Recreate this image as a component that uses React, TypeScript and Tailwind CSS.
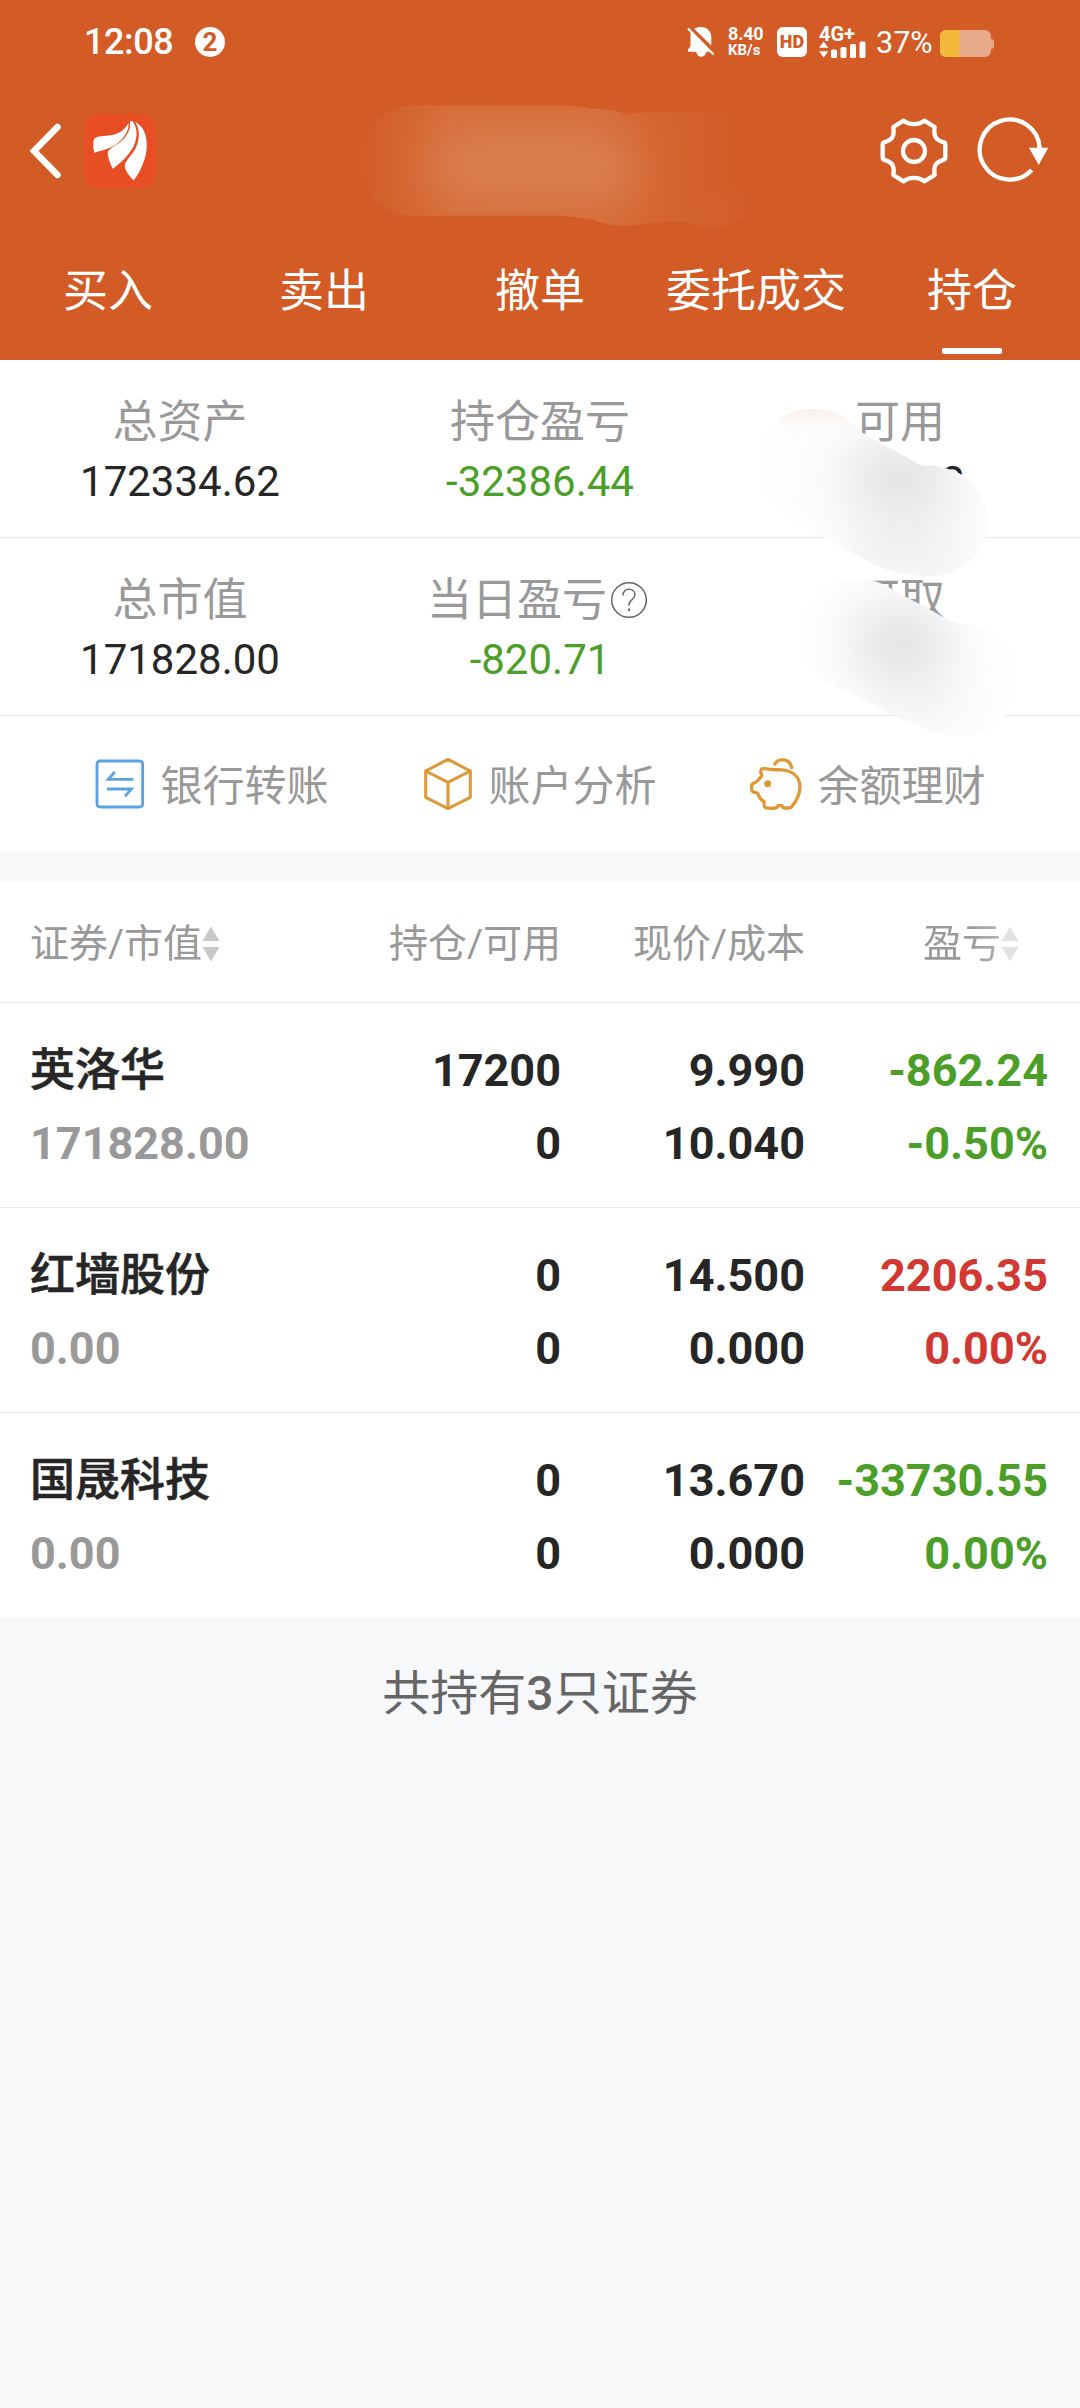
import React from 'react';
import clsx from 'clsx';

interface Holding {
  name: string;
  marketValue: string;
  quantity: string;
  available: string;
  price: string;
  cost: string;
  profit: string;
  profitRate: string;
  trend: 'up' | 'down';
}

const tabs = ['买入', '卖出', '撤单', '委托成交', '持仓'];
const activeTab = '持仓';

const holdings: Holding[] = [
  {
    name: '英洛华',
    marketValue: '171828.00',
    quantity: '17200',
    available: '0',
    price: '9.990',
    cost: '10.040',
    profit: '-862.24',
    profitRate: '-0.50%',
    trend: 'down',
  },
  {
    name: '红墙股份',
    marketValue: '0.00',
    quantity: '0',
    available: '0',
    price: '14.500',
    cost: '0.000',
    profit: '2206.35',
    profitRate: '0.00%',
    trend: 'up',
  },
  {
    name: '国晟科技',
    marketValue: '0.00',
    quantity: '0',
    available: '0',
    price: '13.670',
    cost: '0.000',
    profit: '-33730.55',
    profitRate: '0.00%',
    trend: 'down',
  },
];

const BellOffIcon = () => (
  <svg className="w-[28px] h-[32px] shrink-0" viewBox="0 0 28 32" fill="#fff">
    <path d="M7.300 3C9.300 1.600 11.500 1 14 1c6 0 10.300 4.300 10.300 10.200v8.300z" />
    <path d="M3.500 6L23.500 25.800H1v-2.300l2.500-3.200z" />
    <path d="M9 25.500h10.500c-.8 3.300-2.800 5.300-5.300 5.300s-4.400-2-5.200-5.300z" />
    <path d="M1 2.500L26.500 28.500" stroke="#fff" strokeWidth="2" />
  </svg>
);

const SignalIcon = () => (
  <svg className="w-[47px] h-[17px]" viewBox="0 0 47 17" fill="#fff">
    <path d="M0 6.800L4.700 0.500l4.700 6.300zM0 10.200h9.400L4.700 16.500z" />
    <rect x="12" y="8.500" width="6" height="8.500" rx="1.500" />
    <rect x="21.500" y="6" width="6" height="11" rx="1.500" />
    <rect x="31" y="3" width="6" height="14" rx="1.500" />
    <rect x="40.500" y="0.500" width="6" height="16.500" rx="1.500" />
  </svg>
);

const BatteryIcon = () => (
  <svg className="w-[54px] h-[27px] shrink-0" viewBox="0 0 54 27">
    <path d="M6 0h39a6 6 0 0 1 6 6v3a3 3 0 0 1 3 3v4a3 3 0 0 1-3 3v2a6 6 0 0 1-6 6H6a6 6 0 0 1-6-6V6a6 6 0 0 1 6-6z" fill="#e6a98a" />
    <path d="M6 0h13.500v27H6a6 6 0 0 1-6-6V6a6 6 0 0 1 6-6z" fill="#f2b93b" />
  </svg>
);

const BrandLogo = () => (
  <svg className="w-[72px] h-[74px] shrink-0" viewBox="0 0 210 222" preserveAspectRatio="none">
    <rect width="210" height="222" rx="42" fill="#e84e24" />
    <g fill="#fff">
      <path d="M130 26C118 50 100 62 66 65C44 67 29 68 28 81C26 93 27 104 30 116C60 108 78 103 98 88C118 70 132 48 130 26Z" />
      <path d="M134 22C137 48 125 68 106 84C88 98 70 104 69 118C70 133 76 148 84 164C108 146 130 124 144 98C158 68 156 40 141 21Z" />
      <path d="M150 24C164 49 163 76 150 104C138 126 120 140 119 154C119 169 130 184 145 199C166 172 181 134 183 100C184 66 176 40 150 24Z" />
    </g>
  </svg>
);

const GearIcon = () => (
  <svg className="w-[68px] h-[68px]" viewBox="0 0 204 204" fill="none" stroke="#fff" strokeWidth="13" strokeLinejoin="round">
    <path d="M71 11C87 25 117 25 133 11L164 30C160 57 166 68 192 76Q196 77 196 84V120Q196 127 192 128C166 136 160 147 164 174L133 193C117 179 87 179 71 193L40 174C44 147 38 136 12 128Q8 127 8 120V84Q8 77 12 76C38 68 44 57 40 30Z" />
    <circle cx="102" cy="102" r="33" />
  </svg>
);

const RefreshIcon = () => (
  <svg className="w-[72px] h-[68px]" viewBox="0 0 216 204">
    <path d="M164 159A90 90 0 1 1 188 94" fill="none" stroke="#fff" strokeWidth="13" />
    <path d="M156 92h58l-29 52z" fill="#fff" />
  </svg>
);

const TransferIcon = () => (
  <svg className="w-[50px] h-[50px]" viewBox="0 0 150 150" fill="none" stroke="#5aa2e0" strokeWidth="8.500">
    <rect x="6" y="6" width="137" height="138" rx="9" />
    <path d="M115 61H40L59 39" />
    <path d="M36 90h73L90 112" />
  </svg>
);

const CubeIcon = () => (
  <svg className="w-[50px] h-[54px]" viewBox="0 0 150 162" fill="none" stroke="#df9835" strokeWidth="9" strokeLinejoin="round">
    <path d="M75 7L142 42V121L75 155L8 121V42Z" />
    <path d="M8 42L75 76L142 42M75 76V155" />
  </svg>
);

const PiggyIcon = () => (
  <svg className="w-[54px] h-[54px]" viewBox="0 0 162 162" fill="none" stroke="#df9835" strokeWidth="10" strokeLinejoin="round" strokeLinecap="round">
    <path d="M34 37Q36 34 44 35Q64 39 88 38C126 40 149 58 150 88C150 112 139 133 125 149Q122 153 116 153H102Q98 152 96 146H84Q82 153 76 153Q62 156 46 152Q41 149 42 133C34 130 28 124 24 110Q20 106 10 105Q5 103 5 97V86Q5 80 10 79Q20 76 24 70Q32 60 36 56Q30 46 34 37Z" />
    <path d="M75 21C84 3 119 3 125 32" />
    <circle cx="53" cy="80" r="10.500" fill="#df9835" stroke="none" />
  </svg>
);

const HelpIcon = () => (
  <svg className="ml-[3px] mr-[3px] w-[40px] h-[40px]" viewBox="0 0 40 40" fill="none" stroke="#666" strokeWidth="1.500">
    <circle cx="19" cy="19" r="17.300" />
    <path d="M13 14.500c0-4 2.600-6.300 6-6.300s6 2.300 6 5.600c0 4.600-6 5-6 9.700v1.200" />
    <path d="M19 27.500v2.500" strokeWidth="2" />
  </svg>
);

const SortIcon = ({ color }: { color: string }) => (
  <svg className="w-[18px] h-[36px]" viewBox="0 0 18 36" fill={color}>
    <path d="M9 0.500L17.500 15H0.500z" />
    <path d="M9 35.500L0.500 21H17.500z" />
  </svg>
);

// Smudge over the account name in the title bar
const TitleSmudge = () => (
  <svg className="absolute left-[340px] top-[90px] w-[440px] h-[150px]" viewBox="0 0 1320 450">
    <defs>
      <clipPath id="title-clip">
        <path d="M225 46H660Q710 47 750 56C790 56 830 58 860 74Q900 66 960 66H1130C1220 70 1270 150 1270 240C1270 310 1250 360 1210 385Q1120 435 1040 397H950Q850 415 790 400Q765 392 748 387Q700 378 640 377H225C120 377 60 300 60 210C60 120 130 46 225 46Z" />
      </clipPath>
      <linearGradient id="title-tint" x1="0" x2="1" y1="0" y2="0">
        <stop offset="0.04" stopColor="#dc8c5c" stopOpacity="0.03" />
        <stop offset="0.25" stopColor="#dc8c5c" stopOpacity="0.35" />
        <stop offset="0.6" stopColor="#dc8c5c" stopOpacity="0.35" />
        <stop offset="0.8" stopColor="#dc8c5c" stopOpacity="0.1" />
        <stop offset="0.95" stopColor="#dc8c5c" stopOpacity="0" />
      </linearGradient>
      <filter id="title-blur" x="-50%" y="-80%" width="200%" height="260%">
        <feGaussianBlur stdDeviation="85 65" />
      </filter>
    </defs>
    <g clipPath="url(#title-clip)">
      <rect width="1320" height="450" fill="url(#title-tint)" />
      <path d="M290 120H820L880 200L890 330L640 340L280 330Z" fill="#da8255" fillOpacity="0.85" filter="url(#title-blur)" />
      <ellipse cx="1120" cy="400" rx="90" ry="40" fill="#dc8558" fillOpacity="0.25" filter="url(#title-blur)" />
    </g>
  </svg>
);

// Smudges over the available and withdrawable amounts
const AmountSmudge = () => (
  <svg className="absolute left-[720px] top-[370px] w-[360px] h-[380px]" viewBox="0 0 1080 1140">
    <defs>
      <clipPath id="upper-clip">
        <path d="M280 116C330 116 368 132 400 164Q420 186 450 202L606 287C720 284 801 345 801 452C801 560 720 618 625 618C560 618 510 606 460 582L260 476C180 430 118 370 118 280C118 180 180 116 280 116Z" />
      </clipPath>
      <clipPath id="lower-clip">
        <path d="M405 627C450 627 480 634 520 660L660 736Q700 758 720 762C820 762 884 820 888 915C890 1030 820 1098 715 1098C650 1098 590 1070 520 1035L330 942C270 910 240 860 240 795C240 690 310 627 405 627Z" />
      </clipPath>
      <filter id="amount-blur" x="-100%" y="-100%" width="300%" height="300%">
        <feGaussianBlur stdDeviation="80" />
      </filter>
      <filter id="tint-blur" x="-60%" y="-100%" width="220%" height="300%">
        <feGaussianBlur stdDeviation="22" />
      </filter>
    </defs>
    <g clipPath="url(#upper-clip)">
      <rect width="1080" height="1140" fill="#fdfdfd" />
      <path d="M360 560L500 640H720L700 440L500 380Z" fill="#efefef" filter="url(#amount-blur)" />
      <ellipse cx="540" cy="320" rx="170" ry="100" fill="#dfdfdf" filter="url(#amount-blur)" />
      <ellipse cx="290" cy="115" rx="130" ry="30" fill="#fbeee8" filter="url(#tint-blur)" />
    </g>
    <g clipPath="url(#lower-clip)">
      <rect width="1080" height="1140" fill="#fefefe" />
      <path d="M400 960L680 1100L760 980L600 860Z" fill="#f3f3f3" filter="url(#amount-blur)" />
      <ellipse cx="540" cy="815" rx="150" ry="115" fill="#e0e0e0" filter="url(#amount-blur)" />
    </g>
  </svg>
);

const SummaryCell = ({ label, value, valueClass, help }: { label: string; value: string; valueClass?: string; help?: boolean }) => (
  <div className="flex flex-col items-center">
    <div className="flex h-[60px] items-center pt-[2px] text-[45px] leading-[60px] text-[#999]">
      {label}
      {help && <HelpIcon />}
    </div>
    <div className={clsx('text-[42px] leading-[60px]', valueClass ?? 'text-[#262626]')}>{value}</div>
  </div>
);

export default function App() {
  return (
    <div className="relative w-[1080px] h-[2408px] overflow-hidden bg-[#f7f8fa] font-['Roboto','Noto_Sans_CJK_SC',sans-serif]">
      {/* Header */}
      <header className="h-[360px] bg-[#d35b25] text-white">
        {/* Status bar */}
        <div className="flex h-[84px] items-center pl-[84px]">
          <span className="w-[90px] text-[36px] font-medium leading-[42px] tracking-[-0.4px]">12:08</span>
          <span className="ml-[21px] flex h-[30px] w-[30px] items-center justify-center rounded-full bg-white text-[26px] font-bold leading-[30px] text-[#d35b25]">2</span>
          <div className="ml-[462px] flex items-center">
            <BellOffIcon />
            <div className="ml-[13px] flex w-[36px] flex-col text-[18px] font-bold leading-[16px]">
              <span className="tracking-[-0.2px]">8.40</span>
              <span className="text-[15px]">KB/s</span>
            </div>
            <span className="ml-[13px] flex h-[30px] w-[30px] items-center justify-center rounded-[6px] bg-white text-[18px] font-black leading-[30px] text-[#d35b25]">HD</span>
            <div className="ml-[12px] flex w-[47px] flex-col">
              <span className="text-[20px] font-bold leading-[14px]">4G+</span>
              <SignalIcon />
            </div>
            <span className="ml-[10px] w-[57px] pt-[2px] text-[30.500px] leading-[42px]">37%</span>
            <span className="ml-[7px] mt-[2px]"><BatteryIcon /></span>
          </div>
        </div>

        {/* Title bar */}
        <div className="flex h-[134px] items-center pl-[29px] pr-[31px]">
          <svg className="w-[34px] h-[58px]" viewBox="0 0 34 58" fill="none" stroke="#fff" strokeWidth="6.500" strokeLinecap="round">
            <path d="M28.500 5L5 29L28.500 53" strokeLinejoin="miter" />
          </svg>
          <span className="ml-[21px]"><BrandLogo /></span>
          <div className="ml-auto flex items-center gap-[29px]">
            <GearIcon />
            <RefreshIcon />
          </div>
        </div>

        {/* Tabs */}
        <nav className="grid h-[142px] grid-cols-5">
          {tabs.map((tab) => (
            <div key={tab} className="flex flex-col items-center pt-[44px]">
              <span className="text-[45px] leading-[60px] whitespace-nowrap">{tab}</span>
              {tab === activeTab && <span className="mt-[26px] h-[6px] w-[60px] rounded-[2px] bg-white" />}
            </div>
          ))}
        </nav>
      </header>
      <TitleSmudge />

      {/* Account summary */}
      <section className="bg-white">
        <div className="grid h-[178px] grid-cols-3 border-b border-[#ebebeb] pt-[32px]">
          <SummaryCell label="总资产" value="172334.62" />
          <SummaryCell label="持仓盈亏" value="-32386.44" valueClass="text-[#4b9e28]" />
          <SummaryCell label="可用" value="506.62" />
        </div>
        <div className="grid h-[178px] grid-cols-3 border-b border-[#ebebeb] pt-[32px]">
          <SummaryCell label="总市值" value="171828.00" />
          <SummaryCell label="当日盈亏" value="-820.71" valueClass="text-[#4b9e28]" help />
          <SummaryCell label="可取" value="0.00" />
        </div>
        <div className="grid h-[136px] grid-cols-3 items-center px-[48px] text-[42px] leading-[60px] text-[#999]">
          <div className="flex items-center justify-center gap-[15px]">
            <TransferIcon />
            <span className="pt-[5px]">银行转账</span>
          </div>
          <div className="flex items-center justify-center gap-[15px]">
            <CubeIcon />
            <span className="pt-[5px]">账户分析</span>
          </div>
          <div className="flex items-center justify-center gap-[13px]">
            <PiggyIcon />
            <span className="pt-[5px]">余额理财</span>
          </div>
        </div>
      </section>
      <AmountSmudge />

      {/* Holdings table */}
      <section className="mt-[30px] bg-white">
        <div className="grid h-[121px] grid-cols-[310px_220px_244px_243px] items-center border-b border-[#ebebeb] px-[31px] pt-[3px] text-[39px] leading-[56px] text-[#999]">
          <div className="-ml-px flex items-center">
            证券/市值
            <SortIcon color="#c8c8c8" />
          </div>
          <div className="text-right">持仓/可用</div>
          <div className="text-right">现价/成本</div>
          <div className="flex items-center justify-end pr-[29px]">
            <span className="bg-linear-to-r from-[#999] from-60% to-[#b4b4b4] bg-clip-text text-transparent">盈亏</span>
            <SortIcon color="#e2e2e2" />
          </div>
        </div>

        {holdings.map((item, index) => {
          const trendColor = item.trend === 'up' ? 'text-[#d13832]' : 'text-[#4b9e28]';
          return (
            <div
              key={item.name}
              className={clsx(
                'grid grid-cols-[310px_220px_244px_243px] content-start px-[31px] pt-[31px] text-[45px] font-bold leading-[73px] text-[#262626]',
                index < holdings.length - 1 ? 'h-[205px] border-b border-[#ebebeb]' : 'h-[204px]'
              )}
            >
              <div className="-ml-px font-medium [-webkit-text-stroke:0.6px_#262626]">{item.name}</div>
              <div className="text-right">{item.quantity}</div>
              <div className="text-right">{item.price}</div>
              <div className={clsx('text-right', trendColor)}>{item.profit}</div>
              <div className="-ml-px text-[#999]">{item.marketValue}</div>
              <div className="text-right">{item.available}</div>
              <div className="text-right">{item.cost}</div>
              <div className={clsx('text-right', trendColor)}>{item.profitRate}</div>
            </div>
          );
        })}
      </section>

      <p className="mt-[45px] text-center text-[48px] leading-[64px] text-[#666]">
        共持有<span className="font-medium">3</span>只证券
      </p>
    </div>
  );
}
